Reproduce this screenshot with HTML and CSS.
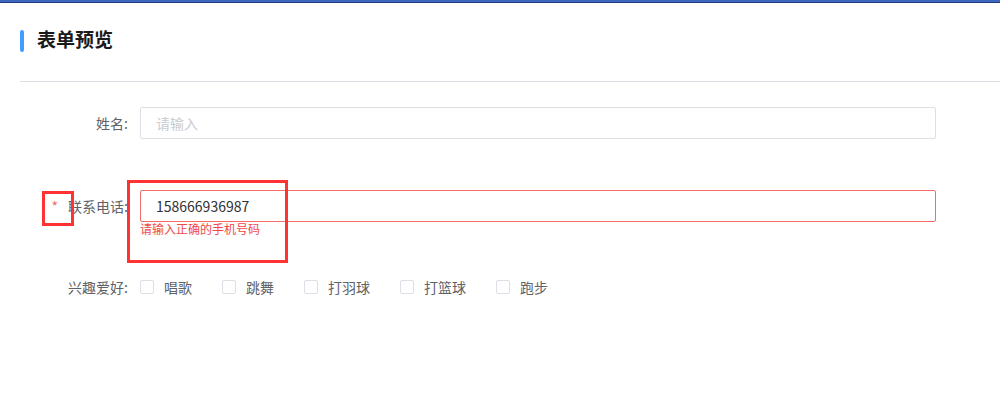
FILE: index.html
```html
<!DOCTYPE html>
<html lang="zh-CN">
<head>
  <meta charset="UTF-8" />
  <meta name="viewport" content="width=device-width, initial-scale=1.0"/>
  <title>表单预览</title>
  <link rel="stylesheet" href="styles.css">
</head>
<body>

  <!-- top strip -->
  <div class="top-strip"></div>

  <div class="page">
    <h2 class="page-title">表单预览</h2>

    <form class="preview-form">
      <div class="form-row">
        <label class="form-label">姓名:</label>
        <div class="form-field">
          <input class="text-input" type="text" placeholder="请输入">
        </div>
      </div>

      <div class="form-row row-phone">
        <label class="form-label"><span class="required">*</span>联系电话:</label>
        <div class="form-field">
          <input class="text-input is-error" type="text" value="158666936987">
          <div class="field-error">请输入正确的手机号码</div>
        </div>
      </div>

      <div class="form-row row-hobby">
        <label class="form-label">兴趣爱好:</label>
        <div class="form-field checks">
          <label class="check"><span class="check-box"></span>唱歌</label>
          <label class="check"><span class="check-box"></span>跳舞</label>
          <label class="check"><span class="check-box"></span>打羽球</label>
          <label class="check"><span class="check-box"></span>打篮球</label>
          <label class="check"><span class="check-box"></span>跑步</label>
        </div>
      </div>
    </form>
  </div>

  <!-- red annotation marks drawn over the screenshot -->
  <div class="mark mark-star"></div>
  <div class="mark mark-field"></div>

</body>
</html>
```

FILE: styles.css
```css
body {
  margin: 0;
  padding: 0;
  background: #fff;
  font-family: "Noto Sans CJK SC", "Microsoft YaHei", sans-serif;
  font-size: 14px;
  color: #606266;
  position: relative;
  height: 414px;
  overflow: hidden;
}

/* Top strip */
.top-strip {
  height: 2px;
  background: #3d66bc;
  border-bottom: 1px solid #1e3c86;
}

.page {
  padding-left: 20px;
}

/* Title with blue marker */
.page-title {
  margin: 0;
  padding: 25px 0 31px 17px;
  position: relative;
  font-size: 19px;
  line-height: 22px;
  font-weight: bold;
  color: #1a1a1a;
  border-bottom: 1px solid #dcdfe6;
}

.page-title::before {
  content: "";
  position: absolute;
  left: 0;
  top: 27px;
  width: 4px;
  height: 22px;
  border-radius: 2px;
  background: #409eff;
}

/* Form */
.preview-form {
  width: 916px;
  padding-top: 25px;
}

.form-row {
  display: flex;
  align-items: flex-start;
}

.row-phone {
  margin-top: 51px;
}

.row-hobby {
  margin-top: 35px;
}

.form-label {
  width: 120px;
  flex-shrink: 0;
  box-sizing: border-box;
  padding-right: 12px;
  text-align: right;
  line-height: 32px;
  color: #606266;
}

.required {
  color: #f56c6c;
  margin-right: 10px;
}

.form-field {
  flex: 1;
}

.text-input {
  display: block;
  width: 100%;
  height: 32px;
  box-sizing: border-box;
  padding: 0 15px;
  border: 1px solid #dcdfe6;
  border-radius: 2px;
  font-family: inherit;
  font-size: 14px;
  color: #303133;
  outline: none;
}

.text-input::placeholder {
  color: #c8cbd3;
}

.text-input.is-error {
  border-color: #f56c6c;
}

.field-error {
  padding-top: 0;
  font-size: 12px;
  line-height: 14px;
  color: #f04848;
}

/* Checkboxes */
.checks {
  display: flex;
  align-items: center;
  height: 32px;
}

.check {
  display: flex;
  align-items: center;
  margin-right: 30px;
  color: #606266;
}

.check-box {
  width: 14px;
  height: 14px;
  box-sizing: border-box;
  border: 1px solid #dcdfe6;
  border-radius: 2px;
  background: #fff;
  margin-right: 10px;
}

/* Red annotation rectangles */
.mark {
  position: absolute;
  border: 3px solid #ff3333;
  box-sizing: border-box;
}

.mark-star {
  left: 42px;
  top: 191px;
  width: 32px;
  height: 35px;
}

.mark-field {
  left: 127px;
  top: 180px;
  width: 161px;
  height: 83px;
}
```
